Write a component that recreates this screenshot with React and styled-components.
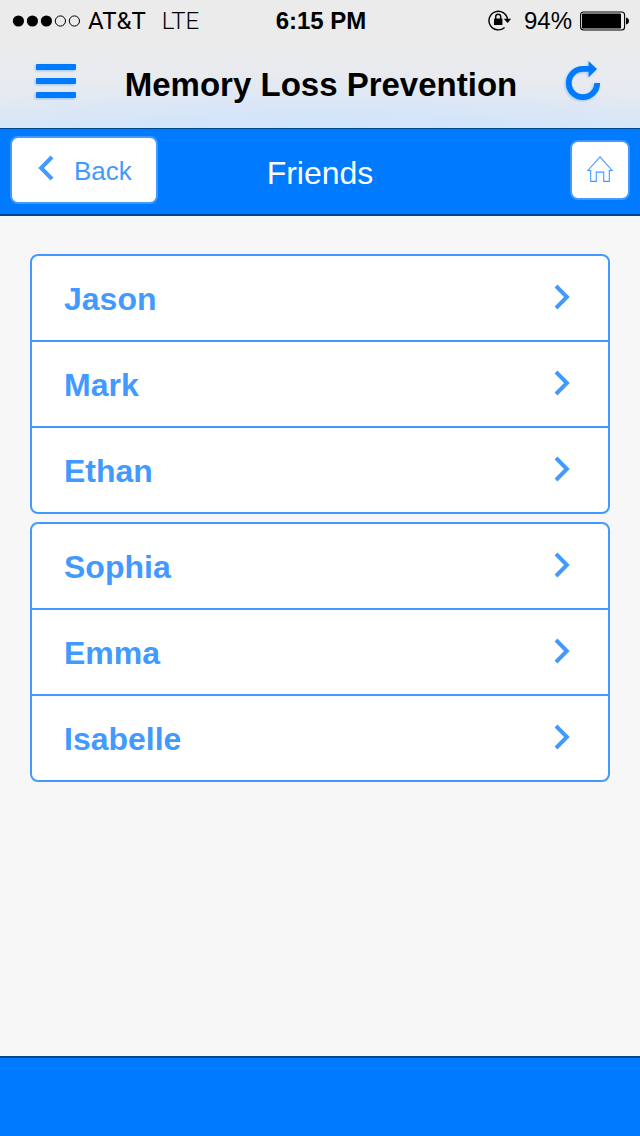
import React from "react";
import styled, { createGlobalStyle } from "styled-components";

const GlobalStyle = createGlobalStyle`
  * {
    box-sizing: border-box;
  }

  body {
    margin: 0;
    background: #f7f7f7;
    font-family: "Liberation Sans", Arial, Helvetica, sans-serif;
  }
`;

const friendGroups = [
  ["Jason", "Mark", "Ethan"],
  ["Sophia", "Emma", "Isabelle"],
];

const signalDots = [true, true, true, false, false];

const Signal = () => (
  <svg width="68" height="12" viewBox="0 0 68 12" aria-hidden="true">
    {signalDots.map((filled, i) => (
      <circle
        key={i}
        cx={6.4 + i * 14}
        cy="6"
        r={filled ? 5.6 : 5.1}
        fill={filled ? "#000" : "none"}
        stroke={filled ? "none" : "#000"}
      />
    ))}
  </svg>
);

const RotationLock = () => (
  <svg width="24" height="22" viewBox="0 0 24 22" aria-hidden="true">
    <path
      d="M16.6 17.4A9.3 9.3 0 1 1 19.5 9.4"
      fill="none"
      stroke="#000"
      strokeWidth="1.4"
    />
    <path d="M15.8 8.8h7.4l-3.7 4.2z" fill="#000" />
    <rect x="6" y="8.6" width="8.4" height="6.4" rx="0.6" fill="#000" />
    <path
      d="M7.7 9V6.8a2.5 2.5 0 0 1 5 0V9"
      fill="none"
      stroke="#000"
      strokeWidth="1.4"
    />
  </svg>
);

const Battery = () => (
  <svg width="50" height="20" viewBox="0 0 50 20" aria-hidden="true">
    <rect x="0.6" y="1" width="44" height="18" rx="3" fill="none" stroke="#000" strokeWidth="1.1" />
    <rect x="2" y="2.4" width="39" height="15.2" rx="1.2" fill="#000" />
    <path d="M46 6.6c1.8.3 3 1.7 3 3.4s-1.2 3.1-3 3.4z" fill="#000" />
  </svg>
);

const MenuIcon = () => (
  <svg width="40" height="34" viewBox="0 0 40 34" aria-hidden="true">
    <rect y="0" width="40" height="6" rx="1" />
    <rect y="14" width="40" height="6" rx="1" />
    <rect y="28" width="40" height="6" rx="1" />
  </svg>
);

const ReloadIcon = () => (
  <svg width="36" height="40" viewBox="0 0 36 40" aria-hidden="true">
    <path
      d="M31.2 22A14.2 14.2 0 1 1 17 7.8h6.4"
      fill="none"
      stroke="#007aff"
      strokeWidth="5.8"
    />
    <path d="M22.6 0l8.4 8-8.4 8.2z" />
  </svg>
);

const Chevron = ({ back }) => (
  <svg width="16" height="26" viewBox="0 0 16 26" aria-hidden="true">
    <path
      d={back ? "M14 2L3.1 13 14 24" : "M2 2L12.9 13 2 24"}
      fill="none"
      stroke="#429aff"
      strokeWidth="4"
    />
  </svg>
);

const HomeIcon = () => (
  <svg width="26" height="26" viewBox="0 0 26 26" aria-hidden="true">
    <path
      d="M13 0.8L0.9 14.5h2.8v10.9h5.6v-9.3h7.4v9.3h5.6V14.5h2.8z"
      fill="none"
      stroke="#429aff"
      strokeWidth="1.1"
    />
  </svg>
);

const App = () => {
  return (
    <Page>
      <GlobalStyle />
      <Header>
        <StatusBar>
          <StatusSide>
            <Signal />
            <Carrier>AT&amp;T</Carrier>
            <Network>LTE</Network>
          </StatusSide>
          <Clock>6:15 PM</Clock>
          <StatusSide $end>
            <RotationLock />
            <Percent>94%</Percent>
            <Battery />
          </StatusSide>
        </StatusBar>
        <NavBar>
          <IconButton aria-label="Menu">
            <MenuIcon />
          </IconButton>
          <AppTitle>Memory Loss Prevention</AppTitle>
          <IconButton aria-label="Refresh">
            <ReloadIcon />
          </IconButton>
        </NavBar>
      </Header>

      <Toolbar>
        <ToolbarSide>
          <BackButton>
            <Chevron back />
            Back
          </BackButton>
        </ToolbarSide>
        <ToolbarTitle>Friends</ToolbarTitle>
        <ToolbarSide $end>
          <HomeButton aria-label="Home">
            <HomeIcon />
          </HomeButton>
        </ToolbarSide>
      </Toolbar>

      <Content>
        {friendGroups.map((group) => (
          <FriendList key={group[0]}>
            {group.map((name) => (
              <FriendItem key={name}>
                <FriendLink href={`#${name.toLowerCase()}`}>
                  {name}
                  <Chevron />
                </FriendLink>
              </FriendItem>
            ))}
          </FriendList>
        ))}
      </Content>

      <Footer />
    </Page>
  );
};

const Page = styled.div`
  display: flex;
  flex-direction: column;
  min-height: 100vh;
`;

const Header = styled.header`
  background:
    radial-gradient(ellipse 70% 50% at 50% 108%, rgba(205, 227, 255, 0.9), rgba(205, 227, 255, 0)),
    linear-gradient(#ebebeb 0%, #ebebec 35%, #e6eaf0 75%, #dae7f6 100%);
`;

const StatusBar = styled.div`
  display: grid;
  grid-template-columns: 1fr auto 1fr;
  align-items: center;
  height: 40px;
  padding: 2px 10px 0 12px;
  font-size: 24px;
  line-height: 28px;
`;

const StatusSide = styled.div`
  display: flex;
  align-items: center;
  justify-content: ${(props) => (props.$end ? "flex-end" : "flex-start")};
  gap: 8px;
`;

const Carrier = styled.span`
  font-family: Roboto, "Liberation Sans", sans-serif;
`;

const Network = styled(Carrier)`
  margin-left: 8px;
  font-weight: 300;
`;

const Percent = styled.span`
  margin-left: 4px;
`;

const Clock = styled.span`
  font-weight: 700;
`;

const NavBar = styled.div`
  display: flex;
  align-items: center;
  justify-content: space-between;
  height: 88px;
  padding: 0 38px 0 36px;
`;

const IconButton = styled.button`
  display: flex;
  padding: 0 0 6px;
  border: none;
  background: none;
  cursor: pointer;

  svg {
    fill: #007aff;
    filter: drop-shadow(-1px 1px 1px rgba(0, 122, 255, 0.35));
  }
`;

const AppTitle = styled.h1`
  margin: 0;
  padding-top: 2px;
  font-size: 33px;
  line-height: 40px;
  font-weight: 700;
  color: #000;
`;

const Toolbar = styled.div`
  display: grid;
  grid-template-columns: 1fr auto 1fr;
  align-items: center;
  height: 88px;
  padding: 0 10px 4px;
  background: #007aff;
  border-top: 1px solid #00468f;
  border-bottom: 2px solid #00468f;
`;

const ToolbarSide = styled.div`
  display: flex;
  justify-content: ${(props) => (props.$end ? "flex-end" : "flex-start")};
`;

const ToolbarTitle = styled.h2`
  margin: 0;
  padding-top: 6px;
  font-size: 32px;
  line-height: 40px;
  font-weight: 400;
  color: #fff;
`;

const ToolbarButton = styled.button`
  display: flex;
  align-items: center;
  border: 2px solid #429aff;
  border-radius: 8px;
  background: #fff;
  color: #429aff;
  font-family: inherit;
  cursor: pointer;
`;

const BackButton = styled(ToolbarButton)`
  gap: 20px;
  height: 68px;
  padding: 2px 24px 0 26px;
  font-size: 26px;
  line-height: 32px;

  svg {
    margin-bottom: 6px;
  }
`;

const HomeButton = styled(ToolbarButton)`
  justify-content: center;
  width: 60px;
  height: 60px;
  padding: 0 0 2px;
`;

const Content = styled.main`
  display: flex;
  flex: 1;
  flex-direction: column;
  gap: 8px;
  padding: 38px 30px;
`;

const FriendList = styled.ul`
  margin: 0;
  padding: 0;
  list-style: none;
  background: #fff;
  border: 2px solid #429aff;
  border-radius: 8px;
`;

const FriendItem = styled.li`
  & + & {
    border-top: 2px solid #429aff;
  }
`;

const FriendLink = styled.a`
  display: flex;
  align-items: center;
  justify-content: space-between;
  height: 84px;
  padding: 2px 38px 0 32px;
  color: #429aff;
  font-size: 32px;
  line-height: 40px;
  font-weight: 700;
  text-decoration: none;

  svg {
    margin-bottom: 4px;
  }
`;

const Footer = styled.footer`
  height: 80px;
  background: #007aff;
  border-top: 2px solid #00468f;
`;

export default App;
